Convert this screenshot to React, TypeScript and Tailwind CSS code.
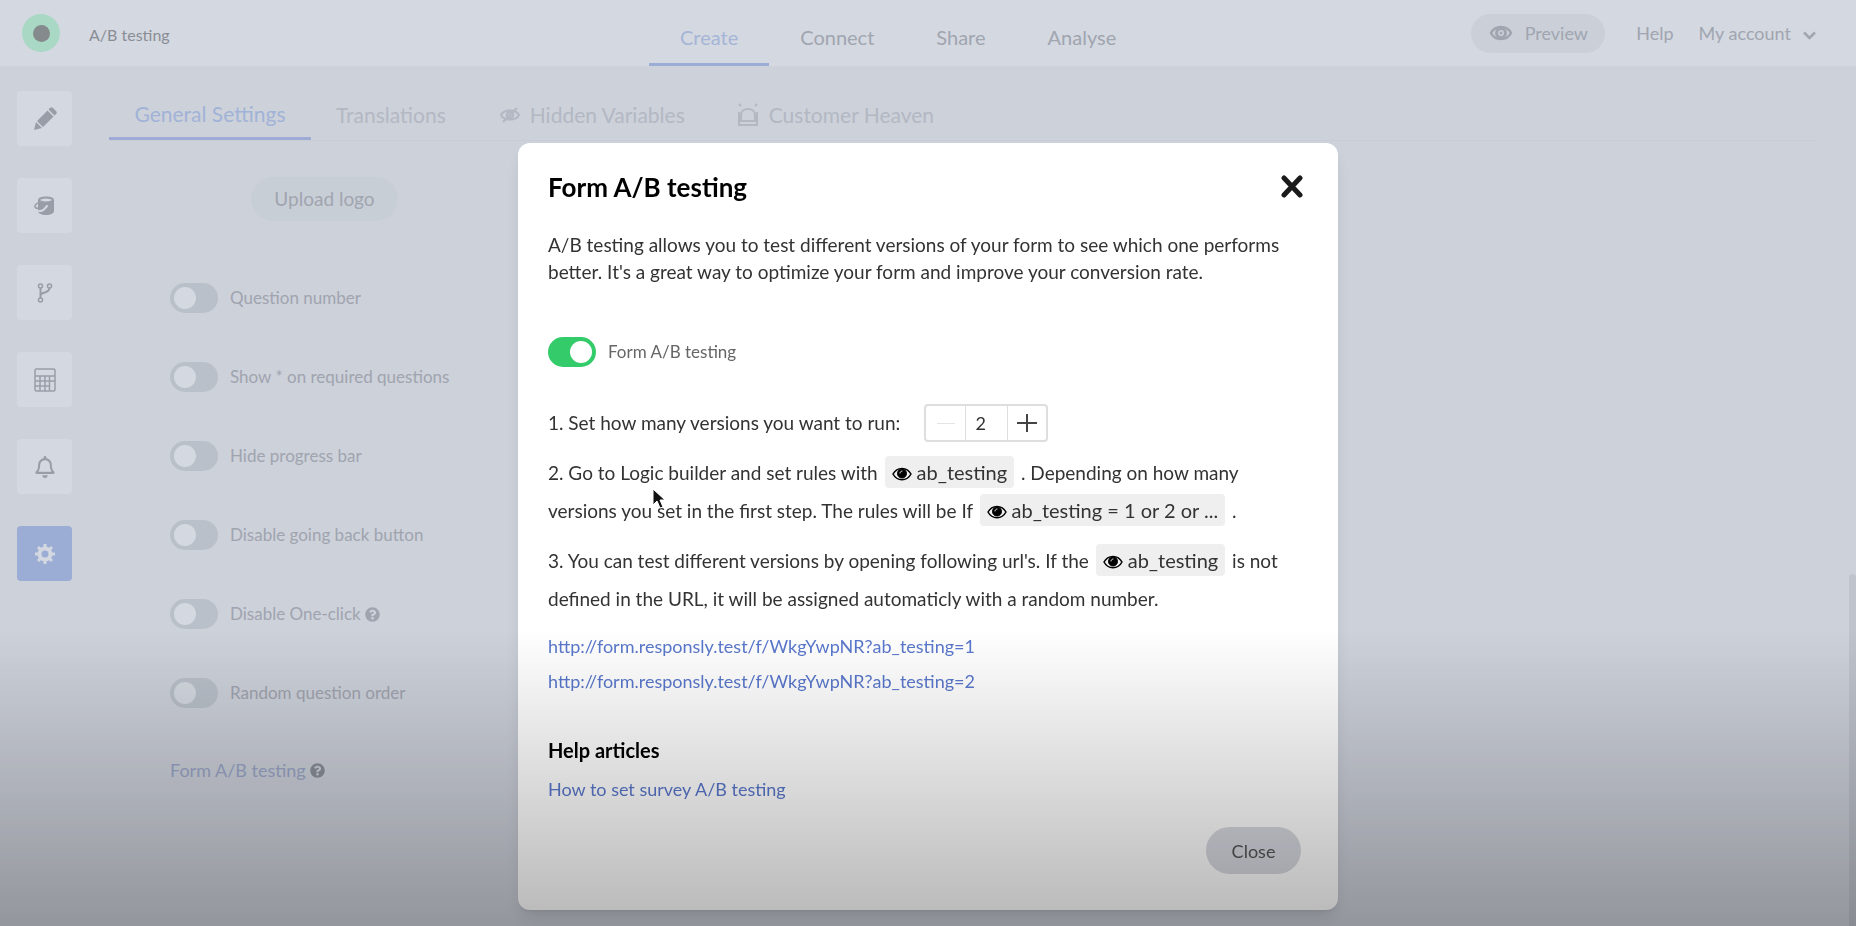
import { useState } from "react";
import { FaQuestionCircle, FaRegBell } from "react-icons/fa";

const settings = [
  { label: "Question number" },
  { label: "Show * on required questions" },
  { label: "Hide progress bar" },
  { label: "Disable going back button" },
  { label: "Disable One-click", help: true },
  { label: "Random question order" },
];

const navItems = ["Create", "Connect", "Share", "Analyse"];

function PencilIcon() {
  return (
    <svg width="24" height="24" viewBox="0 0 24 24" fill="currentColor">
      <path d="M1 23l2-8 6 6zM4 14L14.500 3.500l6 6L10 20zM15.500 2.500l1.500-1.500c1-1 2-1 3 0l3 3c1 1 1 2 0 3l-1.500 1.500z" />
    </svg>
  );
}

function PaintBucketIcon() {
  return (
    <svg width="21" height="20" viewBox="0 0 21 20" fill="none">
      <path d="M4 4v11c0 2 3 4 8 4s8-2 8-4V4z" fill="currentColor" />
      <ellipse cx="12" cy="4" rx="7" ry="2.500" fill="#d4d8e0" stroke="currentColor" strokeWidth="2" />
      <path d="M4 7c-3 1-4 4-2 5s4 0 6-1" stroke="currentColor" strokeWidth="1.500" />
      <path d="M13 10c-2 2-2 4-6 5l-2 0" stroke="#d4d8e0" strokeWidth="2" strokeLinecap="round" />
    </svg>
  );
}

function BranchIcon() {
  return (
    <svg width="16" height="20" viewBox="0 0 16 20" fill="none" stroke="currentColor" strokeWidth="1.500">
      <circle cx="3.500" cy="3" r="2" />
      <circle cx="12.500" cy="3" r="2" />
      <circle cx="3.500" cy="17" r="2" />
      <path d="M3.500 5v10M12.500 5c0 6-9 3-9 8" strokeWidth="2" />
    </svg>
  );
}

function CalculatorIcon() {
  return (
    <svg width="22" height="24" viewBox="0 0 22 24" fill="none" stroke="currentColor" strokeWidth="1.500">
      <rect x="1" y="1" width="20" height="22" rx="1.500" />
      <path d="M1 8h20M1 13h14M1 18h14M6 8v15M11 8v15M15.500 8v15M15.500 13H21" />
    </svg>
  );
}

function GearIcon() {
  return (
    <svg width="20" height="20" viewBox="0 0 20 20" fill="none" stroke="currentColor">
      <circle cx="10" cy="10" r="5.500" strokeWidth="4" />
      <path
        d="M10 0v4M10 16v4M0 10h4M16 10h4M3 3l3 3M14 14l3 3M17 3l-3 3M6 14l-3 3"
        strokeWidth="3"
      />
    </svg>
  );
}

function AlarmIcon() {
  return (
    <svg width="22" height="24" viewBox="0 0 22 24" fill="none" stroke="currentColor" strokeWidth="2">
      <path d="M4 19v-7c0-8 14-8 14 0v7" />
      <path d="M2 18h18v4H2zM2 9v10M20 9v10M4 3L2 1M18 3l2-2" />
    </svg>
  );
}

function PreviewIcon() {
  return (
    <svg width="24" height="16" viewBox="0 0 24 16" fill="none" stroke="currentColor">
      <path d="M2 8c4-8 16-8 20 0-4 8-16 8-20 0z" strokeWidth="2.500" />
      <circle cx="12" cy="8" r="4.500" strokeWidth="3" />
      <circle cx="12" cy="8" r="1" fill="currentColor" />
    </svg>
  );
}

function HiddenIcon() {
  return (
    <svg width="20" height="16" viewBox="0 0 20 16" fill="none" stroke="currentColor">
      <path d="M1 8c3-6 15-6 18 0-3 6-15 6-18 0z" strokeWidth="2" />
      <circle cx="10" cy="8" r="3" strokeWidth="2.500" />
      <path d="M3 15L17 1" strokeWidth="2" />
    </svg>
  );
}

function EyeIcon() {
  return (
    <svg className="inline align-[-1px] mr-[5px]" width="20" height="14" viewBox="0 0 20 14" fill="none" stroke="#000">
      <path d="M1 7c4-7.500 14-7.500 18 0-4 7.500-14 7.500-18 0z" strokeWidth="1.500" />
      <circle cx="10" cy="6.500" r="4.500" fill="#000" />
      <path d="M8 6c0-1 1-2 2-2" stroke="#efefef" strokeLinecap="round" />
    </svg>
  );
}

const tools = [
  { name: "Edit", icon: <PencilIcon /> },
  { name: "Design", icon: <PaintBucketIcon /> },
  { name: "Logic", icon: <BranchIcon /> },
  { name: "Calculator", icon: <CalculatorIcon /> },
  { name: "Notifications", icon: <FaRegBell size={22} /> },
];

function VariableTag({ text }: { text: string }) {
  return (
    <span className="inline-block h-8 leading-8 px-[7px] mx-[2px] rounded bg-[#efefef] text-xl leading-8 whitespace-nowrap">
      <EyeIcon />
      {text}
    </span>
  );
}

function SettingToggle({ label, help }: { label: string; help?: boolean }) {
  return (
    <label className="flex items-center gap-3 h-[30px] text-[17px] text-[#a0a4af]">
      <input
        type="checkbox"
        className="appearance-none w-12 h-[30px] rounded-full bg-[#b9c0c9] p-1 before:content-[''] before:block before:size-[22px] before:rounded-full before:bg-[#d4d8e0]"
      />
      <span className="flex items-center gap-1">
        {label}
        {help && <FaQuestionCircle size={15} />}
      </span>
    </label>
  );
}

function Header() {
  return (
    <header className="h-[66px] bg-[#d4d8e0] flex items-center text-[#a0a5b0] text-lg">
      <div className="flex items-center gap-[29px] pl-[22px] w-[649px]">
        <div className="size-[38px] rounded-full bg-[#a9d8c5] flex items-center justify-center">
          <div className="size-[17px] rounded-full bg-[#858a8c]"></div>
        </div>
        <span className="pt-1 text-base text-[#898d95]">A/B testing</span>
      </div>
      <nav className="flex h-full text-xl">
        {navItems.map((item) => (
          <a
            key={item}
            href="#"
            className={
              item === "Create"
                ? "flex items-center px-[31px] pt-[10px] border-b-[3px] border-[#9badd4] text-[#a5b5d8]"
                : "flex items-center px-[31px] pt-[10px] border-b-[3px] border-transparent"
            }
          >
            {item}
          </a>
        ))}
      </nav>
      <div className="ml-auto flex items-center pr-10">
        <button className="h-[39px] w-[134px] mr-[31px] rounded-full bg-[#cbd0d8] flex items-center justify-center gap-3">
          <PreviewIcon />
          Preview
        </button>
        <a href="#" className="mr-[25px]">Help</a>
        <button className="flex items-center gap-3">
          My account
          <svg className="mt-1" width="13" height="9" viewBox="0 0 13 9" fill="none" stroke="currentColor" strokeWidth="2.500">
            <path d="M1 1.500l5.500 5.500L12 1.500" />
          </svg>
        </button>
      </div>
    </header>
  );
}

function Sidebar() {
  return (
    <aside className="w-[109px] pt-[25px] pl-[17px] flex flex-col gap-8">
      {tools.map((tool) => (
        <button
          key={tool.name}
          aria-label={tool.name}
          className="size-[55px] rounded bg-[#d4d8e0] text-[#989da8] flex items-center justify-center"
        >
          {tool.icon}
        </button>
      ))}
      <button aria-label="Settings" className="size-[55px] rounded bg-[#9badd4] text-[#d4d8e0] flex items-center justify-center">
        <GearIcon />
      </button>
    </aside>
  );
}

function SettingsPage() {
  return (
    <main className="flex-1 pr-10">
      <div className="flex h-[75px] text-[21px] text-[#b3b8c3] border-b border-[#c7ccd5]">
        <a href="#" className="flex items-center w-[202px] justify-center pt-6 border-b-[3px] border-[#9fabd6] text-[#a1b3d7]">
          General Settings
        </a>
        <a href="#" className="flex items-center pt-6 pl-[25px]">Translations</a>
        <a href="#" className="flex items-center gap-[10px] pt-6 pl-[54px]">
          <HiddenIcon />
          Hidden Variables
        </a>
        <a href="#" className="flex items-center gap-[10px] pt-6 pl-[52px]">
          <AlarmIcon />
          Customer Heaven
        </a>
      </div>
      <div className="pt-9 pl-[61px] flex flex-col items-start">
        <button className="ml-[81px] w-[147px] h-11 rounded-full bg-[#c8ced6] text-[19px] text-[#a0a5b0]">Upload logo</button>
        <div className="mt-[62px] flex flex-col gap-[49px]">
          {settings.map((setting) => (
            <SettingToggle key={setting.label} label={setting.label} help={setting.help} />
          ))}
        </div>
        <a href="#" className="mt-[47px] flex items-center gap-1 h-[30px] text-lg text-[#9aa6c8]">
          Form A/B testing
          <FaQuestionCircle size={15} className="text-[#8b9098]" />
        </a>
      </div>
    </main>
  );
}

function TestingModal() {
  const [versions, setVersions] = useState(2);
  const links = Array.from({ length: versions }, (_, i) => `http://form.responsly.test/f/WkgYwpNR?ab_testing=${i + 1}`);

  return (
    <div className="fixed inset-0 flex justify-center items-start pt-[143px]">
      <div
        role="dialog"
        aria-labelledby="modal-title"
        className="w-[820px] bg-white rounded-xl shadow-lg px-[30px] pb-9 text-[19px] text-[#333]"
      >
        <div className="flex items-center justify-between pt-6 pr-1">
          <h2 id="modal-title" className="text-[26px] leading-10 font-bold text-black">Form A/B testing</h2>
          <button aria-label="Close dialog">
            <svg width="24" height="24" viewBox="0 0 24 24" stroke="#1a1a1a" strokeWidth="5" strokeLinecap="round">
              <path d="M4 3l16 17M20 3L4 20" />
            </svg>
          </button>
        </div>
        <p className="mt-6 leading-[27px]">
          A/B testing allows you to test different versions of your form to see which one performs
          <br />
          better. It's a great way to optimize your form and improve your conversion rate.
        </p>
        <label className="mt-[52px] flex items-center gap-3 h-[30px] text-[17px] text-[#666]">
          <input
            type="checkbox"
            defaultChecked
            className="appearance-none w-12 h-[30px] rounded-full bg-[#b9c0c9] checked:bg-[#34cb6b] p-1 before:content-[''] before:block before:size-[22px] before:rounded-full before:bg-white checked:before:ml-auto"
          />
          Form A/B testing
        </label>
        <div className="mt-[37px] flex items-center gap-6">
          <span>1. Set how many versions you want to run:</span>
          <div className="flex h-[38px] border-2 border-[#dedede] rounded text-lg">
            <button aria-label="Fewer versions" className="w-[39px] flex items-center justify-center" onClick={() => setVersions(Math.max(2, versions - 1))}>
              <svg width="18" height="18" stroke="#e4e4e4" strokeWidth="1">
                <path d="M0 9.500h18" />
              </svg>
            </button>
            <input aria-label="Versions" readOnly value={versions} className="w-[43px] pr-3 text-center border-x border-[#dedede]" />
            <button aria-label="More versions" className="w-[38px] flex items-center justify-center" onClick={() => setVersions(versions + 1)}>
              <svg width="20" height="20" stroke="#444" strokeWidth="2">
                <path d="M0 10h20M10 1v18" />
              </svg>
            </button>
          </div>
        </div>
        <p className="mt-3 leading-[38px]">
          2. Go to Logic builder and set rules with <VariableTag text="ab_testing" /> . Depending on how many
          <br />
          versions you set in the first step. The rules will be If <VariableTag text="ab_testing = 1 or 2 or ..." /> .
        </p>
        <p className="mt-3 leading-[38px]">
          3. You can test different versions by opening following url's. If the <VariableTag text="ab_testing" /> is not
          <br />
          defined in the URL, it will be assigned automaticly with a random number.
        </p>
        <div className="mt-[11px] flex flex-col items-start text-lg leading-[35px] text-[#5a78cc]">
          {links.map((link) => (
            <a key={link} href={link}>{link}</a>
          ))}
        </div>
        <h3 className="mt-9 text-xl leading-[30px] font-bold text-black">Help articles</h3>
        <a href="#" className="mt-[9px] inline-block text-lg leading-[30px] text-[#5a78cc]">How to set survey A/B testing</a>
        <div className="mt-[23px] flex justify-end pr-[7px]">
          <button className="w-[95px] h-[47px] rounded-full bg-[#d9dae2] text-lg text-[#555]">Close</button>
        </div>
      </div>
    </div>
  );
}

function App() {
  return (
    <div className="min-h-screen bg-[#cdd1da] font-['Lato','Liberation_Sans',sans-serif]">
      <Header />
      <div className="flex">
        <Sidebar />
        <SettingsPage />
      </div>
      <div className="fixed right-0 top-[574px] bottom-0 w-[7px] rounded-t bg-[#bfc3cc]"></div>
      <TestingModal />
      {/* dark fade at the bottom of the screen */}
      <div className="fixed inset-x-0 bottom-0 h-[296px] bg-linear-to-b from-transparent to-black/28 pointer-events-none"></div>
      <svg className="fixed left-[652px] top-[488px] pointer-events-none" width="14" height="21" viewBox="0 0 14 21">
        <path d="M1 1v16l4-4 3 7 3-1-3-7h5z" fill="#111" stroke="#fff" />
      </svg>
    </div>
  );
}

export default App;
